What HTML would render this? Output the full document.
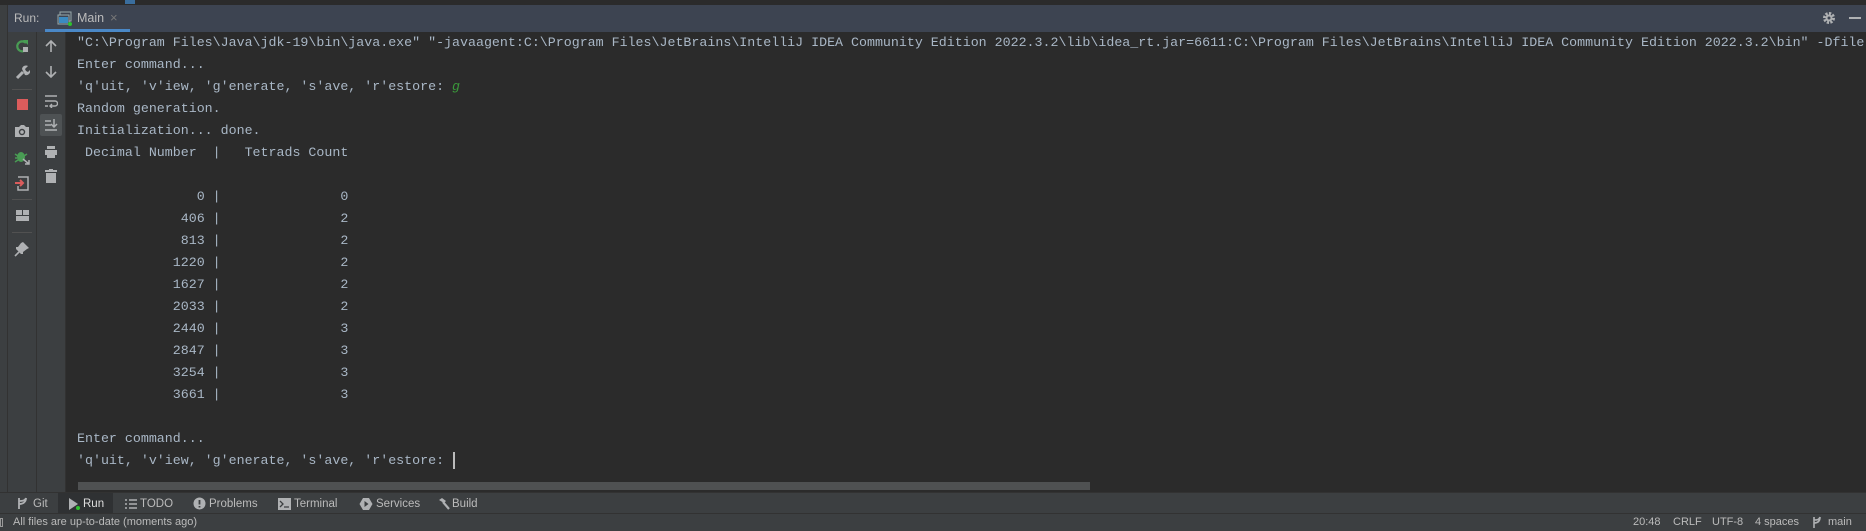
<!DOCTYPE html>
<html><head><meta charset="utf-8"><style>
*{margin:0;padding:0;box-sizing:border-box}
html,body{overflow:hidden}
body{width:1866px;height:531px;background:#2b2b2b;position:relative;overflow:hidden;font-family:"Liberation Sans",sans-serif}
.abs{position:absolute}
.mono{font-family:"Liberation Mono",monospace;font-size:13.3px;color:#a9b7c6;white-space:pre;line-height:22px}
.ui{font-size:11.5px;color:#bbbbbb;white-space:pre}
</style></head><body>
<div class="abs" style="left:0;top:0;width:1866px;height:5px;background:#2b2b2b"></div>
<div class="abs" style="left:125px;top:0;width:10px;height:4px;background:#3a6e9e"></div>
<!-- header -->
<div class="abs" style="left:8px;top:5px;width:1858px;height:27px;background:#3d4451"></div>
<div class="abs ui" style="left:14px;top:11px;font-size:12px">Run:</div>
<svg class="abs" style="left:57px;top:11px" width="16" height="16"><rect x="3" y="1" width="11" height="9" fill="none" stroke="#9aa" stroke-width="1"/><rect x="1" y="4" width="11" height="9" fill="#3d4451" stroke="#9aa"/><rect x="2" y="6" width="9" height="6" fill="#3b8ac0"/><circle cx="13" cy="13" r="2" fill="#2ec22e"/></svg>
<div class="abs ui" style="left:77px;top:11px;font-size:12.5px">Main</div>
<div class="abs" style="left:110px;top:10px;font-size:13px;color:#777">×</div>
<div class="abs" style="left:45px;top:29px;width:85px;height:3px;background:#4a88c7"></div>
<svg class="abs" style="left:1822px;top:11px" width="14" height="14"><circle cx="7" cy="7" r="4.5" fill="none" stroke="#afb1b3" stroke-width="3" stroke-dasharray="2.2 1.3"/><circle cx="7" cy="7" r="3.5" fill="#afb1b3"/><circle cx="7" cy="7" r="1.5" fill="#3d4451"/></svg>
<div class="abs" style="left:1849px;top:17px;width:12px;height:2px;background:#afb1b3"></div>
<!-- left side -->
<div class="abs" style="left:0;top:5px;width:8px;height:508px;background:#3c3f41;border-right:1px solid #323232"></div>
<div class="abs" style="left:8px;top:32px;width:29px;height:460px;background:#3c3f41;border-right:1px solid #323232"></div>
<div class="abs" style="left:37px;top:32px;width:29px;height:460px;background:#3c3f41;border-right:1px solid #323232"></div>
<svg class="abs" style="left:14px;top:38px" width="16" height="16"><path d="M12 5A5 5 0 1 0 13 10" fill="none" stroke="#499c54" stroke-width="2.2"/><path d="M9 2h5v5z" fill="#499c54"/><rect x="9" y="9" width="5" height="5" fill="#afb1b3"/></svg>
<svg class="abs" style="left:14px;top:64px" width="16" height="16"><path d="M3 14L9 8" stroke="#afb1b3" stroke-width="3"/><path d="M8 5a4 4 0 0 1 6-3l-3 3 1 2 2 1 2-2a4 4 0 0 1-5 5z" fill="#afb1b3"/></svg>
<div class="abs" style="left:12px;top:89px;width:20px;height:1px;background:#515151"></div>
<div class="abs" style="left:17px;top:99px;width:11px;height:11px;background:#db5c5c"></div>
<svg class="abs" style="left:14px;top:124px" width="16" height="14"><path d="M1 3h4l2-2h3l2 2h3v10H1z" fill="#afb1b3"/><circle cx="8" cy="8" r="3.2" fill="#3c3f41"/><circle cx="8" cy="8" r="1.8" fill="#afb1b3"/></svg>
<svg class="abs" style="left:14px;top:149px" width="16" height="16"><ellipse cx="7" cy="8" rx="4" ry="5" fill="#499c54"/><path d="M1 5l3 2M1 9h2M1 13l3-2M13 5l-3 2" stroke="#499c54" stroke-width="1.5"/><path d="M9 10l6 5M15 11v4h-4" stroke="#afb1b3" stroke-width="1.5" fill="none"/></svg>
<svg class="abs" style="left:14px;top:175px" width="16" height="16"><path d="M4 2h10v13H4v-4" fill="none" stroke="#afb1b3" stroke-width="1.5"/><path d="M1 8h8M6 5l3 3-3 3" stroke="#db5c5c" stroke-width="2" fill="none"/></svg>
<div class="abs" style="left:12px;top:199px;width:20px;height:1px;background:#515151"></div>
<div class="abs" style="left:16px;top:210px;width:6px;height:5px;background:#afb1b3"></div>
<div class="abs" style="left:23px;top:210px;width:6px;height:5px;background:#afb1b3"></div>
<div class="abs" style="left:16px;top:216px;width:13px;height:5px;background:#afb1b3"></div>
<div class="abs" style="left:12px;top:232px;width:20px;height:1px;background:#515151"></div>
<svg class="abs" style="left:14px;top:241px" width="16" height="16"><path d="M9 1l6 6-2 1-4 3 0 2-2 0-5-5 0-2 2 0 3-4z" fill="#afb1b3"/><path d="M5 11l-4 4" stroke="#afb1b3" stroke-width="1.6"/></svg>
<svg class="abs" style="left:44px;top:39px" width="14" height="14"><path d="M7 13V2M2 7l5-5 5 5" stroke="#afb1b3" stroke-width="1.6" fill="none"/></svg>
<svg class="abs" style="left:44px;top:65px" width="14" height="14"><path d="M7 1v11M2 7l5 5 5-5" stroke="#afb1b3" stroke-width="1.6" fill="none"/></svg>
<svg class="abs" style="left:44px;top:94px" width="14" height="14"><path d="M1 2h12M1 7h10a2.5 2.5 0 0 1 0 5H6M8 10l-2 2 2 2M1 12h3" stroke="#afb1b3" stroke-width="1.4" fill="none"/></svg>
<div class="abs" style="left:40px;top:114px;width:22px;height:22px;background:#4e5254;border-radius:2px"></div>
<svg class="abs" style="left:44px;top:118px" width="14" height="14"><path d="M1 3h6M1 7h6M1 12h12M10 1v8M7 6l3 3 3-3" stroke="#afb1b3" stroke-width="1.5" fill="none"/></svg>
<svg class="abs" style="left:44px;top:145px" width="14" height="14"><rect x="3" y="1" width="8" height="3" fill="#afb1b3"/><rect x="1" y="5" width="12" height="5" fill="#afb1b3"/><rect x="3" y="10" width="8" height="3" fill="#afb1b3"/></svg>
<svg class="abs" style="left:44px;top:169px" width="14" height="14"><rect x="1" y="1" width="12" height="2" fill="#afb1b3"/><rect x="5" y="0" width="4" height="2" fill="#afb1b3"/><rect x="2" y="4" width="10" height="10" fill="#afb1b3"/></svg>
<!-- console -->
<div class="abs" style="left:66px;top:32px;width:1800px;height:460px;overflow:hidden">
<div class="abs mono" style="left:11px;top:0">"C:\Program Files\Java\jdk-19\bin\java.exe" "-javaagent:C:\Program Files\JetBrains\IntelliJ IDEA Community Edition 2022.3.2\lib\idea_rt.jar=6611:C:\Program Files\JetBrains\IntelliJ IDEA Community Edition 2022.3.2\bin" -Dfile.encoding=UTF-8
Enter command...
'q'uit, 'v'iew, 'g'enerate, 's'ave, 'r'estore: <span style="color:#3a9a3a;font-style:italic">g</span>
Random generation.
Initialization... done.
 Decimal Number  |   Tetrads Count

               0 |               0
             406 |               2
             813 |               2
            1220 |               2
            1627 |               2
            2033 |               2
            2440 |               3
            2847 |               3
            3254 |               3
            3661 |               3

Enter command...
'q'uit, 'v'iew, 'g'enerate, 's'ave, 'r'estore: </div>
<div class="abs" style="left:387px;top:420px;width:2px;height:17px;background:#bbbbbb"></div>
<div class="abs" style="left:12px;top:450px;width:1012px;height:8px;background:#4f5152"></div>
</div>
<!-- bottom toolbar -->
<div class="abs" style="left:0;top:492px;width:1866px;height:21px;background:#3c3f41;border-top:1px solid #323232"></div>
<div class="abs" style="left:58px;top:493px;width:55px;height:20px;background:#2f3133"></div>
<svg class="abs" style="left:17px;top:497px" width="12" height="13"><path d="M2 1v11M2 4c3 0 6 0 7-3M9 1c0 4-3 6-7 6" stroke="#afb1b3" stroke-width="1.8" fill="none"/></svg>
<div class="abs ui" style="left:33px;top:498px">Git</div>
<svg class="abs" style="left:67px;top:497px" width="14" height="14"><path d="M2 1l9 6-9 6z" fill="#afb1b3"/><circle cx="11" cy="11" r="2" fill="#2ec22e"/></svg>
<div class="abs ui" style="left:83px;top:498px;color:#dfdfdf">Run</div>
<svg class="abs" style="left:125px;top:498px" width="12" height="12"><path d="M0 2h2M4 2h8M0 6h2M4 6h8M0 10h2M4 10h8" stroke="#afb1b3" stroke-width="1.5"/></svg>
<div class="abs ui" style="left:140px;top:498px">TODO</div>
<svg class="abs" style="left:193px;top:497px" width="13" height="13"><circle cx="6.5" cy="6.5" r="6" fill="#afb1b3"/><path d="M6.5 3v4.5M6.5 9v1.5" stroke="#3c3f41" stroke-width="1.8"/></svg>
<div class="abs ui" style="left:209px;top:498px">Problems</div>
<svg class="abs" style="left:278px;top:498px" width="13" height="12"><rect width="13" height="12" fill="#afb1b3"/><path d="M2 3l3 3-3 3M6 9h5" stroke="#3c3f41" stroke-width="1.3" fill="none"/></svg>
<div class="abs ui" style="left:294px;top:498px">Terminal</div>
<svg class="abs" style="left:359px;top:497px" width="14" height="14"><path d="M4 1h6l3.5 6-3.5 6H4L.5 7z" fill="#afb1b3"/><path d="M5.5 4l4 3-4 3z" fill="#3c3f41"/></svg>
<div class="abs ui" style="left:376px;top:498px">Services</div>
<svg class="abs" style="left:435px;top:497px" width="15" height="14"><path d="M4 3l3-2 4 3-2 2z" fill="#afb1b3"/><path d="M8 5l6 7" stroke="#afb1b3" stroke-width="2.2"/></svg>
<div class="abs ui" style="left:452px;top:498px">Build</div>
<!-- status bar -->
<div class="abs" style="left:0;top:513px;width:1866px;height:18px;background:#3c3f41;border-top:1px solid #323232"></div>
<div class="abs" style="left:0;top:518px;width:3px;height:9px;border:1px solid #999"></div>
<div class="abs ui" style="left:13px;top:516px;font-size:11px">All files are up-to-date (moments ago)</div>
<div class="abs ui" style="left:1633px;top:516px;font-size:11px">20:48</div>
<div class="abs ui" style="left:1673px;top:516px;font-size:11px">CRLF</div>
<div class="abs ui" style="left:1712px;top:516px;font-size:11px">UTF-8</div>
<div class="abs ui" style="left:1755px;top:516px;font-size:11px">4 spaces</div>
<svg class="abs" style="left:1812px;top:516px" width="10" height="13"><path d="M2 1v11M2 4c3 0 5 0 6-3M8 1c0 4-2 6-6 6" stroke="#afb1b3" stroke-width="1.6" fill="none"/></svg>
<div class="abs ui" style="left:1828px;top:516px;font-size:11px">main</div>
</body></html>
